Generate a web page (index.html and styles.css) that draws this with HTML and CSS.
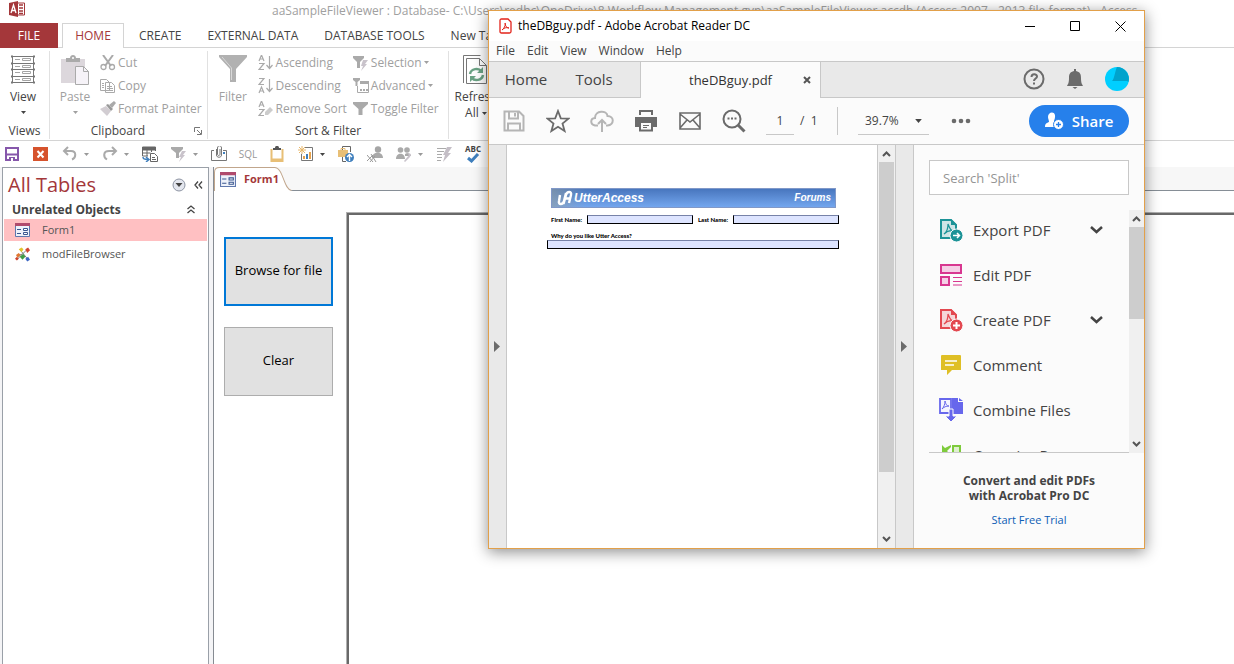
FILE: index.html
```html
<!DOCTYPE html>
<html lang="en">
<head>
  <meta charset="UTF-8">
  <meta name="viewport" content="width=device-width, initial-scale=1.0">
  <title>aaSampleFileViewer</title>
  <link rel="stylesheet" href="styles.css">
</head>
<body>
  <!-- Shared icons -->
  <svg class="sprite" aria-hidden="true">
    <symbol id="caret" viewBox="0 0 5 3"><path d="M0 0h5L2.500 3z" fill="currentColor"/></symbol>
    <symbol id="form" viewBox="0 0 15 14">
      <path d="M.5.500h14v13H.5z" fill="#eef2fa" stroke="#5f78ad"/>
      <path d="M0 0h15v3H0z" fill="#b14a6c"/>
      <path d="M2 6.500h4M2 10.500h4" stroke="#39568f"/>
      <path d="M8.500 5.500h4v2h-4zM8.500 9.500h4v2h-4z" fill="#fff" stroke="#39568f"/>
    </symbol>
    <symbol id="funnel" viewBox="0 0 28 28"><path d="M0 0h28v2L17 14v13h-6V14L0 2z" fill="#b1b1b1"/><path d="M3 2l9.500 11v12" fill="none" stroke="#d8d8d8"/></symbol>
    <symbol id="up" viewBox="0 0 9 6"><path d="M1 5l3.500-3.500L8 5" fill="none" stroke="#555" stroke-width="2"/></symbol>
    <symbol id="down" viewBox="0 0 9 6"><path d="M1 1l3.500 3.500L8 1" fill="none" stroke="#555" stroke-width="2"/></symbol>
    <symbol id="chevron" viewBox="0 0 13 8"><path d="M1 1l5.500 5L12 1" fill="none" stroke="#444" stroke-width="2.500"/></symbol>
    <symbol id="play" viewBox="0 0 6 11"><path d="M0 0l6 5.500L0 11z" fill="#6b6b6b"/></symbol>
    <symbol id="pdf" viewBox="0 0 24 24">
      <path d="M2 2h10l5 5v13H2z" fill="currentColor" fill-opacity=".2" stroke="currentColor" stroke-width="2"/>
      <path d="M12 1v6h6z" fill="currentColor"/>
      <path d="M9 6c2 5 3 7 6 7-4-1-8 1-10 3 3-2 4-6 4-10z" fill="none" stroke="currentColor" stroke-width="1.200"/>
      <circle cx="17.500" cy="17.500" r="6.500" fill="currentColor" stroke="#fbfbfb"/>
    </symbol>
  </svg>

  <!-- Access window -->
  <header class="titlebar">
    <svg class="app-icon" viewBox="0 0 16 16"><path d="M0 2l9-2v16l-9-2z" fill="#a4373a"/><path d="M9 2h6.500v12H9" fill="#fff" stroke="#a4373a"/><path d="M10 4h4M10 7h4M10 10h4M10 12.500h4" stroke="#a4373a" stroke-width="1.500"/><path d="M2 12l2.500-8L7 12M3 9.500h3" fill="none" stroke="#fff" stroke-width="1.300"/></svg>
    <span class="app-title">aaSampleFileViewer : Database- C:\Users\redhc\OneDrive\8 Workflow Management.gyp\aaSampleFileViewer.accdb (Access 2007 - 2013 file format) - Access</span>
  </header>

  <nav class="tabs">
    <button class="file">FILE</button>
    <button class="active">HOME</button>
    <button>CREATE</button>
    <button>EXTERNAL DATA</button>
    <button>DATABASE TOOLS</button>
    <button>New Tab</button>
  </nav>

  <section class="ribbon">
    <div class="group views">
      <div class="group-body">
        <button class="big dark">
          <svg width="26" height="30" viewBox="0 0 26 30" fill="none" stroke="#777"><path d="M2.500 1.500h21v26h-21zM2.500 8.500h21M2.500 14.500h21M2.500 21.500h21"/><path d="M12.500 3.500h8v2h-8zM12.500 10.500h8v2h-8zM12.500 16.500h8v2h-8zM12.500 23.500h8v2h-8zM5 4.500h5M5 11.500h5M5 17.500h5M5 24.500h5" stroke="#a5a5a5"/><path d="M1 1.500h2M23 1.500h2M1 8.500h2M23 8.500h2M1 14.500h2M23 14.500h2M1 21.500h2M23 21.500h2M1 27.500h2M23 27.500h2" stroke-width="2"/></svg>
          <span>View</span>
          <svg class="caret"><use href="#caret"/></svg>
        </button>
      </div>
      <div class="group-name">Views</div>
    </div>

    <div class="group clipboard">
      <div class="group-body">
        <button class="big">
          <svg width="28" height="30" viewBox="0 0 28 30"><path d="M0 4h24v24H0z" fill="#dcd7dc"/><path d="M5 7V3h4c0-4 6-4 6 0h4v4z" fill="#aaa"/><circle cx="12" cy="3" r="1" fill="#fff"/><path d="M14.500 11.500h8l5 5v13h-13z" fill="#f6f3f8" stroke="#aaa"/><path d="M22.500 11.500v5h5" fill="none" stroke="#aaa"/></svg>
          <span>Paste</span>
          <svg class="caret"><use href="#caret"/></svg>
        </button>
        <div class="commands">
          <button>
            <svg width="16" height="16" viewBox="0 0 16 16" fill="none" stroke="#aaa"><path d="M3 0l8 11M13 0L5 11" stroke-width="2"/><circle cx="3.500" cy="12" r="2.500" stroke-width="1.300"/><circle cx="12" cy="12" r="2.500" stroke-width="1.300"/></svg>
            Cut
          </button>
          <button>
            <svg width="16" height="16" viewBox="0 0 16 16" fill="#fff" stroke="#aaa"><path d="M.5 1.500h6l3 3v8h-9zM5.500 4.500h6l3 3v7h-9z"/><path d="M2 5.500h2M2 7.500h2M2 9.500h2M7 8.500h5M7 10.500h6M7 12.500h6"/></svg>
            Copy
          </button>
          <button>
            <svg width="16" height="16" viewBox="0 0 16 16"><path d="M0 8l6-3 5 5-4 5z" fill="#d2cdd2"/><path d="M6 4l2-1 5 5-2 2z" fill="#999"/><path d="M9 4l5-4 2 2-4 5z" fill="#aaa"/></svg>
            Format Painter
          </button>
        </div>
      </div>
      <div class="group-name">Clipboard
        <svg class="launcher" width="8" height="8" viewBox="0 0 8 8" fill="none" stroke="#777"><path d="M.5 5V.5H6M3 3l4 4M7.500 3v4.500H3"/></svg>
      </div>
    </div>

    <div class="group sort">
      <div class="group-body">
        <button class="big">
          <svg width="28" height="30"><use href="#funnel" width="28" height="28"/></svg>
          <span>Filter</span>
        </button>
        <div class="commands">
          <button>
            <svg width="16" height="16" viewBox="0 0 16 16" fill="none" stroke="#aaa"><path d="M1 6l2.500-6L6 6M2 4h3M1 8.500h5L1 14.500h5M11.500 1v12M8.500 10l3 3.500 3-3.500" stroke-width="1.200"/></svg>
            Ascending
          </button>
          <button>
            <svg width="16" height="16" viewBox="0 0 16 16" fill="none" stroke="#aaa"><path d="M1 .5h5L1 6.500h5M1 15l2.500-6L6 15M2 13h3M11.500 1v12M8.500 10l3 3.500 3-3.500" stroke-width="1.200"/></svg>
            Descending
          </button>
          <button>
            <svg width="16" height="16" viewBox="0 0 16 16" fill="none" stroke="#aaa"><path d="M1 6l2.500-6L6 6M2 4h3M1 8.500h5L1 14.500h5" stroke-width="1.200"/><path d="M7 11l5-5 3 3-5 5H7z" fill="#ccc" stroke="none"/></svg>
            Remove Sort
          </button>
        </div>
        <div class="commands">
          <button>
            <svg width="16" height="16" viewBox="0 0 16 16"><path d="M0 1h11v2L7 7v6H4V7L0 3z" fill="#aaa"/><path d="M10 5h5l-3 4h2l-6 7 2-5H8z" fill="#c9c3cb"/></svg>
            Selection <svg class="caret"><use href="#caret"/></svg>
          </button>
          <button>
            <svg width="16" height="16" viewBox="0 0 16 16"><path d="M0 0h7v2L4.500 4v4h-2V4L0 2z" fill="#aaa"/><path d="M4.500 8v6.500h11v-11h-8" fill="#fff" stroke="#aaa"/><path d="M7 3h9v3H7zM7 11h2v2H7zM10 11h2v2h-2zM13 11h2v2h-2z" fill="#aaa"/></svg>
            Advanced <svg class="caret"><use href="#caret"/></svg>
          </button>
          <button>
            <svg width="16" height="16" viewBox="0 0 16 16"><path d="M0 1h15v2L9.500 8v6h-4V8L0 3z" fill="#aaa"/></svg>
            Toggle Filter
          </button>
        </div>
      </div>
      <div class="group-name">Sort &amp; Filter</div>
    </div>

    <div class="group records">
      <div class="group-body">
        <button class="big dark">
          <svg width="26" height="30" viewBox="0 0 26 30" fill="none"><path d="M.5 28V.5h17" stroke="#777"/><path d="M3.500 3.500h13l7 7v18h-20z" fill="#fff" stroke="#777"/><path d="M16.500 3.500v7h7" stroke="#777"/><path d="M7 19c1-6 9-6 11-3M20 20c-1 6-9 6-11 3" stroke="#6aa284" stroke-width="2.500"/><path d="M20 12v6h-6zM7 27v-6h6z" fill="#6aa284"/></svg>
          <span>Refresh</span>
          <span class="second-line">All <svg class="caret"><use href="#caret"/></svg></span>
        </button>
      </div>
    </div>
  </section>

  <!-- Quick access toolbar -->
  <div class="quick">
    <button aria-label="Save"><svg viewBox="0 0 16 16"><path d="M2 2h12v12H2z" fill="#fff" stroke="#8657ab" stroke-width="2"/><path d="M2 8.500h12" stroke="#8657ab" stroke-width="2"/><path d="M5 11h6v4H5z" fill="#8657ab"/><path d="M7 12h2v3H7z" fill="#fff"/></svg></button>
    <button aria-label="Close"><svg viewBox="0 0 16 16"><path d="M0 1h15v14H0z" fill="#d6532d"/><path d="M4.500 5l6 6.500M10.500 5l-6 6.500" stroke="#fff" stroke-width="2"/></svg></button>
    <button aria-label="Undo"><svg viewBox="0 0 16 16" fill="none" stroke="#aaa" stroke-width="2"><path d="M6 1L2 5l4 4M2 5h7c6 0 5 7 1 8.500"/></svg><svg class="caret"><use href="#caret"/></svg></button>
    <button aria-label="Redo"><svg viewBox="0 0 16 16" fill="none" stroke="#aaa" stroke-width="2"><path d="M10 1l4 4-4 4M14 5H7c-6 0-6 6-2 8.500"/></svg><svg class="caret"><use href="#caret"/></svg></button>
    <button aria-label="Export"><svg viewBox="0 0 16 16" fill="none" stroke="#666"><path d="M.5 1h13v3H.5z" fill="#666"/><path d="M.5 4v6H6M5 2v8M9.500 2v4M.5 7h8M13.500 2v3"/><path d="M8.500 7.500h4l3 3v5h-7z" fill="#fff"/><path d="M10 11.500h3M10 13.500h4"/><path d="M1 11c0 2 1 2.500 5 2.500M4 11l3 2.500L4 16" stroke="#3f7fbd" stroke-width="1.500"/></svg></button>
    <button aria-label="Filter"><svg viewBox="0 0 16 16"><path d="M0 1h12v2L8 7v5H5V7L0 3z" fill="#aaa"/><path d="M11 5h4l-3 4h2l-6 7 2-5H8z" fill="#c9c3cb"/></svg><svg class="caret"><use href="#caret"/></svg></button>
    <button aria-label="Attachments"><svg viewBox="0 0 16 16" fill="none" stroke="#777"><path d="M3 4.500H.5v10h15v-10H12M5.500 3v6c0 3 5 3 5 0V2c0-3-4-3-4 0v6c0 2 2.500 2 2.500 0V3"/><path d="M12 7h2" stroke="#3f7fbd" stroke-width="2"/></svg></button>
    <button class="sql">SQL</button>
    <button aria-label="Clipboard"><svg viewBox="0 0 16 16"><path d="M2.500 3v12h11V3" fill="#fff" stroke="#e8bf76" stroke-width="2"/><path d="M2 14h12" stroke="#e8bf76" stroke-width="3"/><path d="M4 4V2h2c0-3 4-3 4 0h2v2z" fill="#555"/></svg></button>
    <button aria-label="Report"><svg viewBox="0 0 16 16" fill="none"><path d="M7 1.500h7.500v13h-11V8" stroke="#777"/><path d="M4 0v8M0 4h8M1 1l6 6M7 1L1 7" stroke="#e8b76a"/><path d="M6 10v3M12 6v7" stroke="#e8a24a" stroke-width="2"/><path d="M9 8v5" stroke="#3f7fbd" stroke-width="2"/></svg><svg class="caret dark-caret"><use href="#caret"/></svg></button>
    <button aria-label="Publish"><svg viewBox="0 0 16 16"><path d="M4.500 4V.5h8V6M4.500 11v4.500H8" fill="none" stroke="#666"/><path d="M0 4h10v7H0z" fill="#e8bf76"/><path d="M3 4V2.500h4V4" fill="none" stroke="#e8bf76"/><circle cx="11.500" cy="11.500" r="4.500" fill="#3f7fbd"/><path d="M11.500 15V9M9 11l2.500-2.500L14 11" fill="none" stroke="#fff" stroke-width="1.400"/></svg></button>
    <button aria-label="User"><svg viewBox="0 0 16 16"><circle cx="11" cy="3.500" r="3.200" fill="#a5a5a5"/><path d="M5 12c0-7 11-7 11 0z" fill="#a9a9a9"/><path d="M0 9l6 7M4 8l5 8M0 15l6-6M3 16l5-6" stroke="#999"/></svg></button>
    <button aria-label="Users"><svg viewBox="0 0 16 16"><circle cx="4.500" cy="4" r="2.800" fill="#aaa"/><circle cx="11" cy="4" r="2.800" fill="#aaa"/><path d="M0 13c0-7 9-7 9 0zM9 8c3-2 5-1 6 2H9z" fill="#aaa"/><path d="M8 15l5-6-2-2 4 1-1 3-5 5z" fill="#c9c3cb"/></svg><svg class="caret"><use href="#caret"/></svg></button>
    <button aria-label="Run"><svg viewBox="0 0 16 16"><path d="M1 2.500h9M1 5.500h7M1 8.500h5M1 11.500h5M1 14.500h4" stroke="#aaa"/><path d="M11 1h5l-4 6h3l-8 9 2-7H7z" fill="#c4bec6"/></svg></button>
    <button class="spell" aria-label="Spelling">ABC<svg viewBox="0 0 14 10"><path d="M2 5l3.500 3L12 1" fill="none" stroke="#3f7fbd" stroke-width="3"/></svg></button>
  </div>

  <main class="workspace">
    <aside class="nav-pane">
      <div class="nav-head">
        <h1>All Tables</h1>
        <button aria-label="Filter list"><svg width="14" height="14" viewBox="0 0 14 14"><circle cx="7" cy="7" r="6" fill="#e3e6ee" stroke="#8d94a3"/><path d="M3.500 5h7L7 9z" fill="#444"/></svg></button>
        <button aria-label="Hide pane"><svg width="9" height="8" viewBox="0 0 9 8" fill="none" stroke="#444" stroke-width="1.300"><path d="M4 .5L1 4l3 3.500M8 .5L5 4l3 3.500"/></svg></button>
      </div>
      <div class="nav-group">
        <h2>Unrelated Objects</h2>
        <svg width="8" height="9" viewBox="0 0 8 9" fill="none" stroke="#444" stroke-width="1.300"><path d="M.5 4L4 1l3.500 3M.5 8L4 5l3.500 3"/></svg>
      </div>
      <a class="nav-item selected" href="#form1"><svg width="15" height="14"><use href="#form"/></svg>Form1</a>
      <a class="nav-item" href="#module"><svg width="16" height="15" viewBox="0 0 16 15"><path d="M2 13L13 2M5 2l9 11M2 9l6-2" stroke="#777"/><path d="M4 2l3-2 2 2-2 3z" fill="#e3c52d"/><path d="M11 2l3-2 2 3-3 3z" fill="#d0432f"/><path d="M1 8l3-2 2 2-3 3z" fill="#e07832"/><path d="M5 10l4-3 2 3-3 3z" fill="#3e9b45"/><path d="M11 12l3-2 2 3-3 2z" fill="#3b66c4"/><path d="M0 12l2-2 2 2-2 2z" fill="#d0432f"/></svg>modFileBrowser</a>
    </aside>

    <section class="document">
      <div class="doc-tabs">
        <button class="doc-tab">
          <svg class="tab-shape" viewBox="0 0 80 23" preserveAspectRatio="none"><path d="M0 23V5c0-3 2-4.500 5-4.500h55c9 0 10 22 19 22.500z" fill="#fff"/><path d="M.5 23V5c0-3 2-4.500 5-4.500h55c9 0 9 21 17 22" fill="none" stroke="#c1a68c"/></svg>
          <svg class="tab-icon" width="16" height="15"><use href="#form"/></svg>
          <span>Form1</span>
        </button>
      </div>
      <div class="form">
        <div class="form-buttons">
          <button class="focused">Browse for file</button>
          <button>Clear</button>
        </div>
        <div class="viewer-frame"></div>
      </div>
    </section>
  </main>

  <!-- Acrobat Reader window -->
  <div class="acrobat">
    <div class="ac-title">
      <svg width="13" height="16" viewBox="0 0 13 16" fill="none" stroke="#e2231a"><path d="M1 2.500C1 1.500 1.500 1 2.500 1H9l3 3v9.500c0 1-.5 1.500-1.500 1.500h-8C1.500 15 1 14.500 1 13.500z" stroke-width="1.300"/><path d="M6 5c1 0 0 5-3 7M6 5c0 3 2 5 4 5-3-1-5 0-7 2"/></svg>
      <span>theDBguy.pdf - Adobe Acrobat Reader DC</span>
      <button aria-label="Minimize"><svg width="11" height="11"><path d="M0 5.500h10" stroke="#000"/></svg></button>
      <button aria-label="Maximize"><svg width="11" height="11"><path d="M.5.500h9v9h-9z" fill="none" stroke="#000"/></svg></button>
      <button aria-label="Close"><svg width="11" height="11"><path d="M.5.500l10 10M10.500.500l-10 10" stroke="#000"/></svg></button>
    </div>
    <div class="ac-menu">
      <button>File</button><button>Edit</button><button>View</button><button>Window</button><button>Help</button>
    </div>
    <div class="ac-tabs">
      <button class="home">Home</button>
      <button class="tools">Tools</button>
      <div class="ac-tab">
        <button>theDBguy.pdf</button>
        <button class="close-tab" aria-label="Close tab"><svg width="8" height="8" viewBox="0 0 8 8"><path d="M1 1l6 6M7 1L1 7" stroke="#555" stroke-width="2"/></svg></button>
      </div>
      <div class="ac-account">
        <button aria-label="Help"><svg width="22" height="22" viewBox="0 0 22 22" fill="none" stroke="#6b6b6b" stroke-width="2"><circle cx="11" cy="11" r="9.500"/><path d="M8.500 9c0-3.500 5.500-3.500 5.500-.5 0 2-3 2-3 4.500M11 14.500v2" /></svg></button>
        <button aria-label="Notifications"><svg width="18" height="20" viewBox="0 0 18 20" fill="#6b6b6b"><path d="M8 0h2v2c4 1 5 3 5 7 0 5 1 6 2 8H1c1-2 2-3 2-8 0-4 1-6 5-7zM6.500 18h5L9 20z"/></svg></button>
        <button aria-label="Account"><svg width="24" height="24" viewBox="0 0 24 24"><circle cx="12" cy="12" r="12" fill="#00cfff"/><path d="M12 0a12 12 0 0 1 11.500 15L22 14H7C9 13 10 4 12 0z" fill="#00a3cc"/></svg></button>
      </div>
    </div>
    <div class="ac-tools">
      <button aria-label="Save"><svg width="22" height="22" viewBox="0 0 22 22" fill="none" stroke="#b5b5b5" stroke-width="2"><path d="M1.500 1.500H16l4.500 4.500v14.500h-19zM6 2v6.500h9V2M5 20v-6.500h12V20M12 3v3.500"/></svg></button>
      <button aria-label="Favorite"><svg width="24" height="24" viewBox="0 0 24 24" fill="none" stroke="#6b6b6b" stroke-width="1.800"><path d="M12 2l2.800 7.300 7.700.3-6 4.900 2.100 7.500L12 17.700 5.400 22l2.100-7.500-6-4.900 7.700-.3z"/></svg></button>
      <button aria-label="Upload"><svg width="24" height="22" viewBox="0 0 24 22" fill="none" stroke="#b5b5b5" stroke-width="2"><path d="M8 15.500H5c-5-1-5-7 0-7.500C5 0 17 0 17.500 6c7 0 7 9 0 9.500H16M12 22V11M8 14l4-4 4 4"/></svg></button>
      <button aria-label="Print"><svg width="22" height="22" viewBox="0 0 22 22"><path d="M4 0h14v5H4zM0 7h22v10h-4v-4H4v4H0z" fill="#6b6b6b"/><path d="M6 2h10v3H6z" fill="#fbfbfb"/><path d="M5 12h12v8.500H5z" fill="#fbfbfb" stroke="#6b6b6b" stroke-width="2"/><path d="M8 15.500h6M8 17.500h4" stroke="#6b6b6b"/></svg></button>
      <button aria-label="Email"><svg width="22" height="18" viewBox="0 0 22 18" fill="none" stroke="#6b6b6b" stroke-width="1.600"><path d="M1 1h20v16H1zM1 2l10 8L21 2M1 16l7-8M21 16l-7-8"/></svg></button>
      <button aria-label="Search"><svg width="24" height="24" viewBox="0 0 24 24" fill="none" stroke="#6b6b6b"><circle cx="10" cy="10" r="8.500" stroke-width="2"/><path d="M16 16l6.500 6.500" stroke-width="3"/><path d="M5.500 9.500h2M9 9.500h2M12.500 9.500h2" stroke-width="2"/></svg></button>
      <div class="page-number">
        <input type="text" value="1" aria-label="Page number"><span>/&nbsp; 1</span>
      </div>
      <div class="zoom">
        <select aria-label="Zoom"><option>39.7%</option></select>
        <svg width="7" height="4"><use href="#caret"/></svg>
      </div>
      <button class="more" aria-label="More"><svg width="20" height="6" viewBox="0 0 20 6" fill="#6b6b6b"><circle cx="3" cy="3" r="2.300"/><circle cx="10" cy="3" r="2.300"/><circle cx="17" cy="3" r="2.300"/></svg></button>
      <button class="share"><svg width="19" height="18" viewBox="0 0 19 18" fill="#fff"><path d="M3 5c0-6 8-6 7 0 0 2-1 3-1 4l2 1-2 5H0c0-4 2-4 4-5 0-2-1-3-1-5z"/><circle cx="13.500" cy="12.500" r="5" stroke="#2680eb"/><path d="M13.500 10v5M11 12.500h5" stroke="#2680eb" stroke-width="1.300"/></svg>Share</button>
    </div>

    <div class="ac-body">
      <div class="strip"><svg width="6" height="11"><use href="#play"/></svg></div>
      <div class="page">
        <div class="banner">
          <svg width="16" height="16" viewBox="0 0 16 16" fill="none" stroke="#fff" stroke-width="2.400"><path d="M3 5L2 11c-1 4 4 4 5 0l2-8M6.500 14l2.500-9c1-4 6-4 5 0l-2 8M9 8.500h4"/></svg>
          <span>UtterAccess</span>
          <span class="forums">Forums</span>
        </div>
        <div class="name-row">
          <label for="first">First Name:</label><input id="first" type="text">
          <label for="last">Last Name:</label><input id="last" type="text">
        </div>
        <div class="why-row">
          <label for="why">Why do you like Utter Access?</label>
          <input id="why" type="text">
        </div>
      </div>
      <div class="scrollbar page-scroll">
        <svg width="9" height="6"><use href="#up"/></svg>
        <div class="thumb"></div>
        <svg width="9" height="6"><use href="#down"/></svg>
      </div>
      <div class="strip right"><svg width="6" height="11"><use href="#play"/></svg></div>
      <aside class="sidebar">
        <input class="search" type="text" placeholder="Search 'Split'" aria-label="Search tools">
        <div class="tool-area">
          <div class="tool-list">
            <button><svg class="teal" viewBox="0 0 24 24"><use href="#pdf"/><path d="M14 17.500h6M18 15l2.500 2.500L18 20" fill="none" stroke="#fff" stroke-width="1.500"/></svg><span>Export PDF</span><svg class="chevron"><use href="#chevron"/></svg></button>
            <button><svg viewBox="0 0 24 24"><path d="M2 2h20v8H2zM2 14h8v8H2z" fill="#f5cfe6" stroke="#d83790" stroke-width="2"/><path d="M14 14.500h9M14 18.500h9M14 22h9" stroke="#d83790" stroke-width="1.200"/></svg><span>Edit PDF</span></button>
            <button><svg class="red" viewBox="0 0 24 24"><use href="#pdf"/><path d="M17.500 14v7M14 17.500h7" stroke="#fff" stroke-width="2"/></svg><span>Create PDF</span><svg class="chevron"><use href="#chevron"/></svg></button>
            <button><svg viewBox="0 0 24 24"><path d="M3 2h18c1 0 1 1 1 1v14h-9l-5 5v-5H2V3s0-1 1-1z" fill="#dfbf25"/><path d="M6 8h12M6 12h9" stroke="#fff" stroke-width="1.500"/></svg><span>Comment</span></button>
            <button><svg viewBox="0 0 24 24"><path d="M1 1h11v14H1z" fill="#f4f4ff" stroke="#6767ec" stroke-width="1.800"/><path d="M13 0h6v4h5v12H13zM20 0l4 3h-4z" fill="#6767ec"/><path d="M6 3c1 4 2 5 4 5-3 0-5 1-7 3 2-2 3-5 3-8z" fill="none" stroke="#6767ec"/><path d="M10 11h4v7h4l-6 6-6-6h4z" fill="#6767ec" stroke="#fbfbfb"/></svg><span>Combine Files</span></button>
            <button><svg viewBox="0 0 24 24"><path d="M14 3h7v16h-7z" fill="#dff0cf" stroke="#7ecb3c" stroke-width="2"/><path d="M3 2v9h8L8 8l4-4V2L6 5z" fill="#7ecb3c"/></svg><span>Organize Pages</span></button>
          </div>
          <div class="scrollbar">
            <svg width="9" height="6"><use href="#up"/></svg>
            <div class="thumb"></div>
            <svg width="9" height="6"><use href="#down"/></svg>
          </div>
        </div>
        <div class="promo">
          <strong>Convert and edit PDFs<br>with Acrobat Pro DC</strong>
          <a href="#trial">Start Free Trial</a>
        </div>
      </aside>
    </div>
  </div>
</body>
</html>
```
FILE: styles.css
```css
* {
  box-sizing: border-box;
}
body {
  margin: 0;
  height: 100vh;
  overflow: hidden;
  display: flex;
  flex-direction: column;
  background: #fff;
  color: #444;
  font-family: "Open Sans", "Noto Sans", sans-serif;
  font-size: 12px;
  line-height: 16px;
}
button {
  font: inherit;
  color: inherit;
  background: none;
  border: none;
  padding: 0;
  white-space: nowrap;
}
input, select {
  font: inherit;
  color: inherit;
  border-radius: 0;
  outline: none;
}
svg {
  flex-shrink: 0;
}
.sprite {
  display: none;
}
.caret {
  width: 5px;
  height: 3px;
}

/* Title bar and ribbon tabs */
.titlebar {
  display: flex;
  height: 23px;
  padding: 1px 0 0 9px;
}
.app-icon {
  width: 16px;
  height: 16px;
}
.app-title {
  margin-left: 247px;
  padding-top: 2px;
  color: #a0a0a0;
  white-space: nowrap;
}
.tabs {
  display: flex;
  height: 25px;
  border-bottom: 1px solid #d4d4d4;
}
.tabs button {
  height: 25px;
  padding: 0 13px;
}
.tabs .file {
  width: 58px;
  margin-right: 4px;
  background: #a4373a;
  color: #fff;
}
.tabs .active {
  width: 62px;
  margin-right: 2px;
  padding: 0;
  background: #fff;
  border: 1px solid #d4d4d4;
  border-bottom: none;
  color: #a4373a;
}

/* Ribbon */
.ribbon {
  display: flex;
  height: 93px;
  padding-top: 3px;
  border-bottom: 1px solid #d4d4d4;
}
.group {
  display: flex;
  flex-direction: column;
  height: 88px;
  border-right: 1px solid #e1e1e1;
}
.group-body {
  display: flex;
  flex: 1;
}
.group-name {
  display: flex;
  justify-content: center;
  align-items: center;
  height: 16px;
}
.views {
  width: 50px;
}
.clipboard {
  width: 158px;
}
.sort {
  width: 241px;
}
.records {
  width: 60px;
  padding-left: 2px;
  border: none;
}
.big {
  width: 50px;
  display: flex;
  flex-direction: column;
  align-items: center;
  padding-top: 4px;
  color: #a0a0a0;
}
.views .big {
  width: 46px;
}
.big span {
  margin-top: 4px;
}
.big .second-line {
  margin-top: 0;
}
.big > .caret {
  margin-top: 6px;
}
.big.dark {
  color: #444;
}
.big span .caret {
  vertical-align: middle;
}
.commands {
  display: flex;
  flex-direction: column;
  width: 96px;
}
.commands button {
  display: flex;
  align-items: center;
  gap: 2px;
  height: 23px;
  color: #a0a0a0;
}
.clipboard .group-name {
  padding-left: 36px;
  gap: 49px;
}

/* Quick access toolbar */
.quick {
  display: flex;
  gap: 13px;
  height: 26px;
  padding: 0 4px;
  align-items: center;
}
.quick button {
  display: flex;
  align-items: center;
  color: #999;
}
.quick button > svg:first-child {
  width: 16px;
  height: 16px;
}
.quick .caret {
  margin-left: 6px;
}
.quick .dark-caret {
  color: #444;
}
.quick .sql {
  width: 16px;
  justify-content: center;
  font-size: 10px;
}
.quick .spell {
  flex-direction: column;
  width: 16px;
  color: #444;
  font-size: 8px;
  font-weight: bold;
  line-height: 8px;
}
.quick .spell svg:first-child {
  width: 14px;
  height: 10px;
}

/* Workspace */
.workspace {
  display: flex;
  flex: 1;
  padding-left: 2px;
  background: #f4f4f6;
}
.nav-pane {
  width: 207px;
  padding-right: 1px;
  border: 1px solid #9aa0a8;
  border-bottom: none;
  background: #fff;
}
.nav-head {
  display: flex;
  align-items: center;
  gap: 8px;
  height: 33px;
  padding: 0 4px 0 5px;
}
.nav-head h1 {
  flex: 1;
  margin: 0;
  color: #a4373a;
  font-size: 20px;
  font-weight: normal;
  line-height: 28px;
}
.nav-head button {
  display: flex;
}
.nav-group {
  display: flex;
  align-items: center;
  justify-content: space-between;
  height: 17px;
  padding: 0 12px 0 9px;
}
.nav-group h2 {
  margin: 0;
  font-size: 12px;
}
.nav-item {
  display: flex;
  align-items: center;
  gap: 12px;
  height: 22px;
  margin: 1px 0 2px 1px;
  padding-left: 11px;
  color: #555;
  font-size: 11px;
  text-decoration: none;
}
.nav-item svg {
  width: 15px;
}
.nav-item.selected {
  background: #ffc0c2;
}
.document {
  display: flex;
  flex-direction: column;
  flex: 1;
  margin-left: 4px;
  border-left: 1px solid #868b92;
  background: #fff;
}
.doc-tabs {
  height: 24px;
  border-bottom: 1px solid #868e96;
  background: #f7f7f7;
}
.doc-tab {
  position: relative;
  display: flex;
  align-items: center;
  gap: 8px;
  width: 80px;
  height: 24px;
  padding-left: 6px;
  color: #a4373a;
  font-size: 11px;
  font-weight: bold;
}
.tab-shape {
  position: absolute;
  left: 0;
  top: 0;
  width: 80px;
  height: 24px;
}
.tab-icon, .doc-tab span {
  position: relative;
}
.form {
  display: flex;
  flex: 1;
  padding: 21px 0 0 10px;
}
.form-buttons {
  display: flex;
  flex-direction: column;
  gap: 21px;
  width: 122px;
  padding-top: 25px;
}
.form-buttons button {
  width: 109px;
  height: 69px;
  padding-bottom: 4px;
  border: 1px solid #adadad;
  background: #e1e1e1;
  color: #000;
  font-size: 13px;
}
.form-buttons .focused {
  border: 2px solid #0078d7;
}
.viewer-frame {
  flex: 1;
  border-top: 1px solid #b0b0b0;
  border-left: 1px solid #b0b0b0;
  box-shadow: inset 2px 2px #696969;
}

/* Acrobat window, floats over the database */
.acrobat {
  position: absolute;
  left: 488px;
  top: 10px;
  display: flex;
  flex-direction: column;
  width: 657px;
  height: 539px;
  border: 1px solid #e2a04a;
  background: #fbfbfb;
  box-shadow: 0 3px 14px rgba(0, 0, 0, 0.45);
}
.ac-title {
  display: flex;
  align-items: center;
  height: 30px;
  padding: 0 18px 0 10px;
  background: #fff;
  color: #000;
}
.ac-title span {
  flex: 1;
  padding-left: 6px;
}
.ac-title button {
  display: flex;
  margin-left: 34px;
}
.ac-menu {
  display: flex;
  gap: 12px;
  height: 21px;
  padding: 0 7px;
  border-bottom: 1px solid #c8c8c8;
}
.ac-tabs {
  display: flex;
  height: 36px;
  border-bottom: 1px solid #c8c8c8;
  background: #e9e9e9;
  font-size: 15px;
}
.home {
  width: 74px;
}
.tools {
  width: 62px;
}
.ac-tabs > button {
  padding-bottom: 2px;
}
.ac-tab {
  display: flex;
  align-items: center;
  justify-content: flex-end;
  gap: 31px;
  width: 181px;
  height: 36px;
  margin-left: 15px;
  padding-right: 9px;
  border: solid #c8c8c8;
  border-width: 0 1px;
  background: #fbfbfb;
  color: #333;
  font-size: 13px;
}
.close-tab {
  display: flex;
}
.ac-account {
  display: flex;
  flex: 1;
  align-items: center;
  justify-content: flex-end;
  gap: 21px;
  padding: 0 15px 2px 0;
}
.ac-account button {
  display: flex;
}
.ac-tools {
  display: flex;
  align-items: center;
  height: 47px;
  padding: 0 15px 0 13px;
  border-bottom: 1px solid #c8c8c8;
}
.ac-tools > button {
  display: flex;
  align-items: center;
  justify-content: center;
  width: 24px;
  margin-right: 20px;
}
.page-number {
  display: flex;
  gap: 6px;
  width: 72px;
  height: 28px;
  align-items: center;
  border-right: 1px solid #c8c8c8;
}
.page-number input {
  width: 28px;
  height: 28px;
  padding: 0;
  border: none;
  border-bottom: 1px solid #c8c8c8;
  background: none;
  text-align: center;
}
.zoom {
  display: flex;
  align-items: center;
  width: 71px;
  height: 28px;
  margin: 0 20px;
  padding: 0 7px;
  border-bottom: 1px solid #c8c8c8;
}
.zoom select {
  flex: 1;
  border: none;
  padding: 0;
  background: none;
  appearance: none;
}
.ac-tools .share {
  gap: 8px;
  width: 100px;
  height: 32px;
  margin: 0 0 0 auto;
  border-radius: 16px;
  background: #2680eb;
  color: #fff;
  font-size: 15px;
  font-weight: 600;
}

/* Page view */
.ac-body {
  display: flex;
  flex: 1;
  min-height: 0;
}
.strip {
  display: flex;
  align-items: center;
  justify-content: center;
  width: 18px;
  padding-right: 1px;
  border-right: 1px solid #c8c8c8;
  background: #e9e9e9;
}
.page {
  flex: 1;
  padding: 43px 38px 0 40px;
  background: #fff;
  color: #000;
  font-family: Lato, sans-serif;
  font-size: 6px;
  font-weight: 900;
  line-height: 8px;
}
.banner {
  display: flex;
  align-items: center;
  gap: 1px;
  height: 20px;
  margin: 0 3px 0 4px;
  padding: 0 4px 0 5px;
  border: 1px solid #8098c8;
  background: linear-gradient(90deg, rgba(150, 160, 160, 0.6), transparent 12%), linear-gradient(#4876be, #73a6ee);
  color: #fff;
  font-family: "Liberation Sans", Arial, sans-serif;
  font-size: 12px;
  font-style: italic;
  line-height: 16px;
}
.forums {
  margin-left: auto;
  font-size: 10px;
}
.name-row {
  display: flex;
  align-items: center;
  justify-content: space-between;
  margin: 7px 0 0 4px;
}
.name-row label {
  white-space: nowrap;
}
.page input {
  height: 9px;
  padding: 0;
  border: 1px solid #000;
  border-top-color: #7782a8;
  background: #dde4ff;
}
.name-row input {
  width: 106px;
}
.why-row {
  display: flex;
  flex-direction: column;
  margin-top: 8px;
}
.why-row label {
  margin-left: 4px;
}
.scrollbar {
  display: flex;
  flex-direction: column;
  align-items: center;
  width: 15px;
  padding: 6px 0;
  background: #f0f0f0;
}
.thumb {
  width: 15px;
  height: 92px;
  margin: 5px 0 auto;
  background: #cdcdcd;
}
.page-scroll {
  width: 19px;
  border: solid #c8c8c8;
  border-width: 0 1px;
}
.page-scroll .thumb {
  height: 310px;
}

/* Tools pane */
.sidebar {
  display: flex;
  flex-direction: column;
  width: 230px;
  padding: 15px 0 0 15px;
}
.search {
  width: 200px;
  height: 35px;
  padding: 0 13px;
  border: 1px solid #c8c8c8;
  background: #fff;
  font-size: 13px;
}
.search::placeholder {
  color: #959595;
}
.tool-area {
  display: flex;
  height: 243px;
  margin-top: 15px;
}
.tool-list {
  flex: 1;
  overflow: hidden;
  border-bottom: 1px solid #c8c8c8;
}
.tool-list button {
  display: flex;
  align-items: center;
  gap: 10px;
  width: 100%;
  height: 45px;
  padding: 0 26px 6px 10px;
  font-size: 15px;
  text-align: left;
}
.tool-list button > svg:first-child {
  width: 24px;
  height: 24px;
}
.tool-list span {
  flex: 1;
}
.tool-list .chevron {
  width: 13px;
  height: 8px;
}
.teal {
  color: #1c9397;
}
.red {
  color: #e34850;
}
.promo {
  display: flex;
  flex-direction: column;
  align-items: center;
  gap: 9px;
  padding: 20px 15px 0 0;
}
.promo strong {
  text-align: center;
  line-height: 15px;
}
.promo a {
  color: #0d5db5;
  font-size: 11px;
  text-decoration: none;
}
```
